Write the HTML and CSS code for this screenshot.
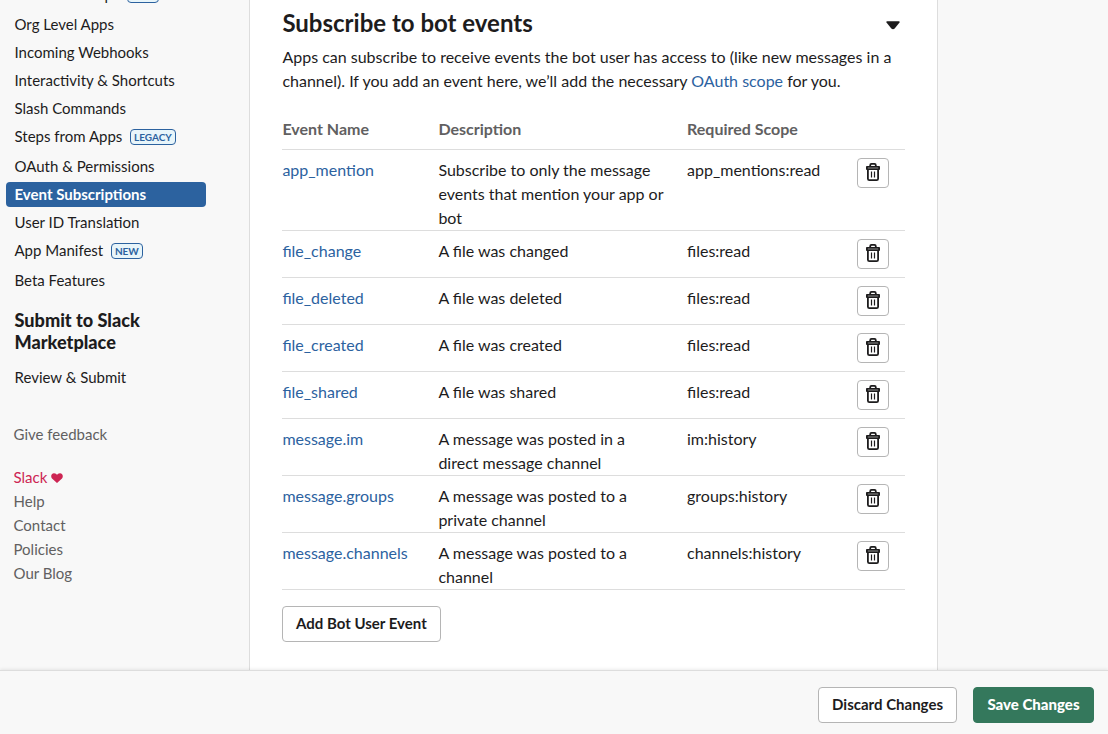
FILE: index.html
```html
<!DOCTYPE html>
<html lang="en">
<head>
    <meta charset="UTF-8">
    <meta name="viewport" content="width=device-width, initial-scale=1.0">
    <title>Event Subscriptions</title>
    <link rel="stylesheet" href="styles.css">
</head>
<body>
    <svg class="sprite" width="0" height="0">
        <symbol id="trash" viewBox="0 0 16 20">
            <path d="M5.2 3.500V2.200Q5.200.9 6.500.9h3q1.300 0 1.300 1.300v1.300M1.900 3.800h12.200v2.300H1.900zM2.900 6.500v9.200q0 1.500 1.500 1.500h7.200q1.500 0 1.500-1.500V6.500" fill="none" stroke="currentColor" stroke-width="1.800" stroke-linejoin="round"/>
            <path d="M6.500 8.500v6M9.500 8.500v6" fill="none" stroke="currentColor" stroke-width="1.200"/>
        </symbol>
    </svg>

    <div class="page">
        <aside class="sidebar">
            <ul class="nav">
                <li class="tagged"><a href="#">Workflow Steps <span class="badge">NEW</span></a></li>
                <li><a href="#">Org Level Apps</a></li>
                <li><a href="#">Incoming Webhooks</a></li>
                <li><a href="#">Interactivity &amp; Shortcuts</a></li>
                <li><a href="#">Slash Commands</a></li>
                <li class="tagged"><a href="#">Steps from Apps <span class="badge">LEGACY</span></a></li>
                <li><a href="#">OAuth &amp; Permissions</a></li>
                <li class="active"><a href="#">Event Subscriptions</a></li>
                <li><a href="#">User ID Translation</a></li>
                <li class="tagged"><a href="#">App Manifest <span class="badge">NEW</span></a></li>
                <li><a href="#">Beta Features</a></li>
            </ul>
            <h3>Submit to Slack Marketplace</h3>
            <ul class="nav">
                <li><a href="#">Review &amp; Submit</a></li>
            </ul>
            <div class="links">
                <a class="feedback" href="#">Give feedback</a>
                <a class="love" href="#">Slack
                    <svg width="12" height="10" viewBox="0 0 12 10"><path d="M6 10 1 5.400C-.6 3.600.3.3 3 .3 4.500.3 5.500 1.100 6 2 6.500 1.100 7.500.3 9 .3c2.700 0 3.600 3.300 2 5.100z" fill="currentColor"/></svg>
                </a>
                <a href="#">Help</a>
                <a href="#">Contact</a>
                <a href="#">Policies</a>
                <a href="#">Our Blog</a>
            </div>
        </aside>

        <main class="content">
            <div class="title">
                <h2>Subscribe to bot events</h2>
                <svg width="14" height="9" viewBox="0 0 14 9"><path d="M1.200.2h11.600q1.300 0 .7 1.200L8.700 7.400Q7 9 5.300 7.400L.5 1.400Q-.1.2 1.200.2z" fill="currentColor"/></svg>
            </div>
            <p class="intro">Apps can subscribe to receive events the bot user has access to (like new messages in a channel). If you add an event here, we’ll add the necessary <a href="#">OAuth scope</a> for you.</p>

            <table class="events">
                <thead>
                    <tr><th class="name">Event Name</th><th class="desc">Description</th><th class="scope">Required Scope</th><th></th></tr>
                </thead>
                <tbody>
                    <tr>
                        <td><a href="#">app_mention</a></td>
                        <td>Subscribe to only the message events that mention your app or bot</td>
                        <td>app_mentions:read</td>
                        <td><button class="delete" aria-label="Delete"><svg><use href="#trash"/></svg></button></td>
                    </tr>
                    <tr>
                        <td><a href="#">file_change</a></td>
                        <td>A file was changed</td>
                        <td>files:read</td>
                        <td><button class="delete" aria-label="Delete"><svg><use href="#trash"/></svg></button></td>
                    </tr>
                    <tr>
                        <td><a href="#">file_deleted</a></td>
                        <td>A file was deleted</td>
                        <td>files:read</td>
                        <td><button class="delete" aria-label="Delete"><svg><use href="#trash"/></svg></button></td>
                    </tr>
                    <tr>
                        <td><a href="#">file_created</a></td>
                        <td>A file was created</td>
                        <td>files:read</td>
                        <td><button class="delete" aria-label="Delete"><svg><use href="#trash"/></svg></button></td>
                    </tr>
                    <tr>
                        <td><a href="#">file_shared</a></td>
                        <td>A file was shared</td>
                        <td>files:read</td>
                        <td><button class="delete" aria-label="Delete"><svg><use href="#trash"/></svg></button></td>
                    </tr>
                    <tr>
                        <td><a href="#">message.im</a></td>
                        <td>A message was posted in a direct message channel</td>
                        <td>im:history</td>
                        <td><button class="delete" aria-label="Delete"><svg><use href="#trash"/></svg></button></td>
                    </tr>
                    <tr>
                        <td><a href="#">message.groups</a></td>
                        <td>A message was posted to a private channel</td>
                        <td>groups:history</td>
                        <td><button class="delete" aria-label="Delete"><svg><use href="#trash"/></svg></button></td>
                    </tr>
                    <tr>
                        <td><a href="#">message.channels</a></td>
                        <td>A message was posted to a channel</td>
                        <td>channels:history</td>
                        <td><button class="delete" aria-label="Delete"><svg><use href="#trash"/></svg></button></td>
                    </tr>
                </tbody>
            </table>
            <button class="btn">Add Bot User Event</button>
        </main>
    </div>

    <footer class="savebar">
        <button class="btn">Discard Changes</button>
        <button class="btn primary">Save Changes</button>
    </footer>
</body>
</html>
```

FILE: styles.css
```css
* {
    box-sizing: border-box;
}

body {
    display: flex;
    flex-direction: column;
    height: 734px;
    margin: 0;
    overflow: hidden;
    background: #f8f8f8;
    color: #1d1c1d;
    font-family: Lato, sans-serif;
    font-size: 15px;
    line-height: 24px;
}

a {
    color: #2c629f;
    text-decoration: none;
}

h2, h3, p, ul {
    margin: 0;
    padding: 0;
}

.sprite {
    display: none;
}

.page {
    display: flex;
    flex: 1;
    min-height: 0;
}

/* Sidebar */
.sidebar {
    width: 249px;
    margin-top: -18px;
    padding-left: 6px;
}

.nav {
    width: 200px;
    list-style: none;
}

.nav li {
    height: 25px;
    margin-bottom: 3px;
    padding: 0 8.5px;
    border-radius: 4px;
}

.nav .tagged {
    margin-bottom: 5px;
}

.nav a {
    display: flex;
    align-items: center;
    height: 24px;
    color: #1d1c1d;
}

.nav .active {
    background: #2c629f;
}

.nav .active a {
    color: #fff;
    font-weight: 700;
}

.badge {
    height: 16px;
    margin: 2px 0 0 7.5px;
    padding: 0 3.2px;
    border: 1px solid #2c629f;
    border-radius: 4px;
    background: #e8f5fa;
    color: #2c629f;
    font-size: 10px;
    font-weight: 700;
    line-height: 15px;
}

.sidebar h3 {
    width: 180px;
    margin: 16px 0 12px;
    padding-left: 8.5px;
    font-size: 18.1px;
    font-weight: 900;
    line-height: 22px;
}

.links {
    display: flex;
    flex-direction: column;
    margin-top: 32px;
    padding-left: 7.5px;
}

.links a {
    color: #616061;
}

.links .feedback {
    margin-bottom: 19px;
}

.links .love {
    color: #cd2553;
}

/* Main panel */
.content {
    width: 689px;
    padding: 7px 32px 0;
    border: solid #ddd;
    border-width: 0 1px;
    background: #fff;
}

.title {
    display: flex;
    align-items: center;
    justify-content: space-between;
    height: 32px;
    padding: 0 5px 0 0.4px;
}

.title h2 {
    font-size: 24px;
    font-weight: 700;
    line-height: 32px;
}

.title svg {
    margin-top: 4px;
}

.intro {
    margin-top: 6px;
    padding-left: 0.4px;
    font-size: 16px;
}

.events {
    width: 623px;
    margin: 16px 0 16px;
    border-spacing: 0;
    font-size: 16px;
    table-layout: fixed;
}

.events th {
    height: 41px;
    padding: 0 0 1px 0.4px;
    border-bottom: 1px solid #ddd;
    color: #616061;
    font-weight: 700;
    text-align: left;
}

.events .name {
    width: 156px;
}

.events .desc {
    width: 249px;
}

.events .scope {
    width: 170px;
}

.events td {
    padding: 8px 0 0 0.4px;
    border-bottom: 1px solid #ddd;
    vertical-align: top;
}

.events td:nth-child(2) {
    padding-right: 20px;
}

.events .scope,
.events td:nth-child(3),
.events td:last-child {
    padding-left: 0;
}

.delete {
    display: flex;
    align-items: center;
    justify-content: center;
    width: 32px;
    height: 30px;
    margin-bottom: 8px;
    padding: 0;
    border: 1px solid #b5b5b5;
    border-radius: 4px;
    background: #fff;
    color: #1d1c1d;
}

.delete svg {
    width: 16px;
    height: 20px;
}

.btn {
    height: 36px;
    padding: 0 13px 2px;
    border: 1px solid #b5b5b5;
    border-radius: 4px;
    background: #fff;
    color: #1d1c1d;
    font: 700 15px Lato, sans-serif;
}

/* Bottom bar */
.savebar {
    z-index: 1;
    display: flex;
    justify-content: flex-end;
    gap: 16px;
    height: 64px;
    padding: 16px 14px 0;
    border-top: 1px solid #ddd;
    background: #f8f8f8;
    box-shadow: 0 -1px 3px rgba(0, 0, 0, 0.08);
}

.primary {
    width: 121px;
    padding: 0 0 2px;
    border-color: #34785c;
    background: #34785c;
    color: #fff;
    font-weight: 900;
}
```
